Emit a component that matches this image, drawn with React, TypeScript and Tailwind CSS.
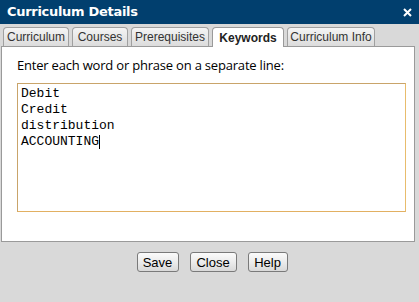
const tabs = [
  { label: "Curriculum", w: "w-[66px]" },
  { label: "Courses", w: "w-[56px]" },
  { label: "Prerequisites", w: "w-[78px]" },
  { label: "Keywords", w: "w-[72px]", active: true },
  { label: "Curriculum Info", w: "w-[88px]" },
]

const keywords = ["Debit", "Credit", "distribution", "ACCOUNTING"]

function Btn({ children, w }: { children: string; w: string }) {
  return (
    <button
      className={`${w} h-[20px] rounded-[3px] border border-[#7a7a7a] bg-gradient-to-b from-[#fbfbfb] via-[#ececec] to-[#d9d9d9] text-[13px] leading-none text-black font-['Liberation_Sans',Arial,sans-serif]`}
    >
      {children}
    </button>
  )
}

export default function App() {
  return (
    <div className="w-[419px] h-[302px] bg-[#d9d9d9] flex flex-col overflow-hidden font-['Liberation_Sans',Arial,sans-serif]">
      <div className="h-[24px] bg-[#013f6e] flex items-center justify-between pl-[7px] pr-[7px]">
        <span className="text-white font-bold text-[13px] font-['DejaVu_Sans',sans-serif] tracking-[-0.3px]">
          Curriculum Details
        </span>
        <svg width="9" height="9" viewBox="0 0 9 9">
          <path d="M1 1L8 8M8 1L1 8" stroke="white" strokeWidth="2" />
        </svg>
      </div>
      <div className="ml-[1px] w-[414px] mt-[3px]">
        <div className="flex gap-[3px] pl-[2px] h-[19px] items-end">
          {tabs.map((t) =>
            t.active ? (
              <div
                key={t.label}
                className={`${t.w} h-[20px] -mb-px relative z-10 bg-white border border-b-0 border-[#9a9a9a] rounded-t-[4px] flex items-center justify-center text-[12px] font-bold text-[#222]`}
              >
                {t.label}
              </div>
            ) : (
              <div
                key={t.label}
                className={`${t.w} h-[19px] bg-gradient-to-b from-[#f4f4f4] to-[#dcdcdc] border border-b-0 border-[#a0a0a0] rounded-t-[4px] flex items-center justify-center text-[12px] text-[#333]`}
              >
                {t.label}
              </div>
            )
          )}
        </div>
        <div className="h-[196px] bg-white border border-[#9a9a9a] px-[15px] pt-[9px]">
          <div className="text-[13px] text-black font-['Open_Sans',sans-serif] leading-[18px] tracking-[-0.2px]">
            Enter each word or phrase on a separate line:
          </div>
          <div className="mt-[9px] w-[389px] h-[129px] border border-[#c9a46a] border-r-[#e8bc6c] border-b-[#e2b062] px-[3px] pt-[2px] font-['Liberation_Mono',monospace] text-[13px] leading-[16px] text-black">
            {keywords.map((k, i) => (
              <div key={k} className="flex items-center">
                {k}
                {i === keywords.length - 1 && <span className="inline-block w-px h-[14px] bg-black" />}
              </div>
            ))}
          </div>
        </div>
      </div>
      <div className="flex justify-center gap-[11px] mt-[10px] pl-[5px]">
        <Btn w="w-[42px]">Save</Btn>
        <Btn w="w-[47px]">Close</Btn>
        <Btn w="w-[40px]">Help</Btn>
      </div>
    </div>
  )
}
